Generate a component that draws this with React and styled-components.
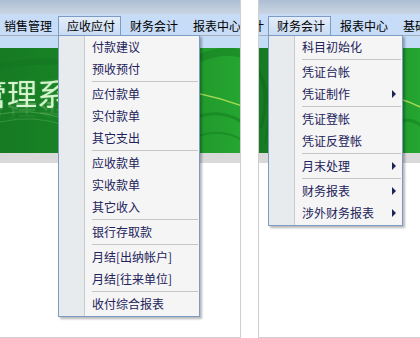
import React from "react";
import styled, { createGlobalStyle } from "styled-components";

const GlobalStyle = createGlobalStyle`
  html, body { margin: 0; padding: 0; background: #ffffff; }
  body { font-family: "Noto Sans CJK SC", "Noto Sans", sans-serif; }
  #root { width: 420px; height: 338px; }
`;

const Page = styled.div`
  display: flex;
  gap: 17px;
  width: 420px;
  height: 338px;
  background: #ffffff;
  overflow: hidden;
`;

const Panel = styled.section`
  box-sizing: border-box;
  flex: 0 0 ${(p) => p.$w}px;
  height: 338px;
  display: flex;
  flex-direction: column;
  overflow: hidden;
  border-bottom: 1px solid #cfcfcf;
  border-left: ${(p) => (p.$side === "right" ? "1px solid #cfcfcf" : "none")};
  border-right: ${(p) => (p.$side === "left" ? "1px solid #cfcfcf" : "none")};
`;

const TitleStrip = styled.div`
  flex: 0 0 14px;
  background: linear-gradient(#adbed3, #c8d4e2);
`;

const MenuBar = styled.nav`
  box-sizing: border-box;
  flex: 0 0 22px;
  display: flex;
  padding-top: 2px;
  background: #c6dcf7;
  border-bottom: 1px solid #a3adba;
  & > :first-child {
    margin-left: ${(p) => p.$lead}px;
  }
`;

const MenuItem = styled.div`
  position: relative;
  box-sizing: border-box;
  flex: 0 0 auto;
  height: 19px;
  padding: 0 ${(p) => (p.$tight ? 3 : 5)}px 0 8px;
  border: 1px solid transparent;
  border-bottom: none;
  font-size: 12px;
  line-height: 18px;
  color: #000000;
  white-space: nowrap;
  ${(p) =>
    p.$active &&
    `
    border-color: #7c9cc6;
    background: linear-gradient(#e4edf9, #cadcf3);
    z-index: 3;
  `}
`;

const SubStrip = styled.div`
  flex: 0 0 12px;
  background: #c5dcf7;
`;

const Banner = styled.div`
  flex: 0 0 105px;
  display: grid;
  overflow: hidden;
  background: linear-gradient(90deg, #167a23 0%, #1a8526 35%, #1f952a 75%, #25a531 100%);
  & > * {
    grid-area: 1 / 1;
  }
`;

const BannerArt = styled.svg`
  display: block;
  width: 100%;
  height: 105px;
`;

const BannerTitle = styled.div`
  align-self: start;
  justify-self: start;
  margin: 28px 0 0 -23px;
  font-size: 30px;
  line-height: 32px;
  letter-spacing: 0;
  color: #d6f4cd;
  white-space: nowrap;
  text-shadow: 0 0 2px rgba(210, 255, 200, 0.35);
  -webkit-box-reflect: below -6px linear-gradient(transparent 45%, rgba(255, 255, 255, 0.28));
`;

const GrayStrip = styled.div`
  flex: 0 0 10px;
  background: #d9d9d9;
`;

const Dropdown = styled.div`
  position: absolute;
  top: 100%;
  left: -1px;
  box-sizing: border-box;
  width: ${(p) => p.$w}px;
  padding-bottom: 1px;
  border: 1px solid #7c9cc6;
  background: linear-gradient(
    to right,
    #e8ebee 0,
    #e8ebee 25px,
    #c8cacc 25px,
    #c8cacc 26px,
    #f5f5f5 26px
  );
  box-shadow: 2px 2px 2px rgba(0, 0, 0, 0.28);
  z-index: 10;
`;

const DropItem = styled.div`
  display: flex;
  align-items: center;
  justify-content: space-between;
  height: 22px;
  padding: 0 6px 0 33px;
  font-size: 12px;
  color: #22225a;
  white-space: nowrap;
`;

const Separator = styled.div`
  height: 1px;
  margin: 1px 1px 1px 33px;
  background: #c6c6c6;
`;

const Arrow = styled.span`
  width: 0;
  height: 0;
  border-left: 4px solid #1c2458;
  border-top: 4px solid transparent;
  border-bottom: 4px solid transparent;
`;

const leftMenu = [
  "付款建议",
  "预收预付",
  "-",
  "应付款单",
  "实付款单",
  "其它支出",
  "-",
  "应收款单",
  "实收款单",
  "其它收入",
  "-",
  "银行存取款",
  "-",
  "月结[出纳帐户]",
  "月结[往来单位]",
  "-",
  "收付综合报表",
];

const rightMenu = [
  ["科目初始化"],
  "-",
  ["凭证台帐"],
  ["凭证制作", true],
  "-",
  ["凭证登帐"],
  ["凭证反登帐"],
  "-",
  ["月末处理", true],
  "-",
  ["财务报表", true],
  ["涉外财务报表", true],
];

function MenuList({ items, width }) {
  return (
    <Dropdown $w={width}>
      {items.map((it, i) => {
        if (it === "-") return <Separator key={i} />;
        const [label, sub] = Array.isArray(it) ? it : [it, false];
        return (
          <DropItem key={i}>
            <span>{label}</span>
            {sub && <Arrow />}
          </DropItem>
        );
      })}
    </Dropdown>
  );
}

function LeftArt() {
  return (
    <BannerArt viewBox="0 0 240 105" preserveAspectRatio="none">
      <path d="M-10 20 Q 60 5 140 25" stroke="#12701f" strokeWidth="6" fill="none" opacity="0.35" />
      <path d="M0 66 Q 30 60 62 70" stroke="#8fd88a" strokeWidth="1" fill="none" opacity="0.35" />
      <path d="M0 74 Q 35 66 66 78" stroke="#8fd88a" strokeWidth="1" fill="none" opacity="0.25" />
      <path d="M160 40 Q 205 44 242 58" stroke="#b9e25a" strokeWidth="1.6" fill="none" opacity="0.85" />
      <path d="M195 70 Q 220 60 242 74" stroke="#117a1d" strokeWidth="3" fill="none" opacity="0.5" />
      <path d="M198 88 Q 222 80 242 92" stroke="#117a1d" strokeWidth="2" fill="none" opacity="0.45" />
      <path d="M200 10 Q 225 0 242 6" stroke="#106e1b" strokeWidth="8" fill="none" opacity="0.35" />
    </BannerArt>
  );
}

function RightArt() {
  return (
    <BannerArt viewBox="0 0 161 105" preserveAspectRatio="none">
      <path d="M-2 20 Q 12 45 2 80" stroke="#0f6a1b" strokeWidth="3" fill="none" opacity="0.55" />
      <path d="M4 30 Q 14 55 6 95" stroke="#0f6a1b" strokeWidth="2" fill="none" opacity="0.4" />
      <path d="M110 44 Q 140 48 163 60" stroke="#b9e25a" strokeWidth="1.6" fill="none" opacity="0.85" />
      <path d="M135 75 Q 150 68 163 78" stroke="#117a1d" strokeWidth="3" fill="none" opacity="0.45" />
    </BannerArt>
  );
}

export default function App() {
  return (
    <>
      <GlobalStyle />
      <Page>
        <Panel $w={241} $side="left">
          <TitleStrip />
          <MenuBar $lead={-5}>
            <MenuItem>销售管理</MenuItem>
            <MenuItem $active>
              应收应付
              <MenuList items={leftMenu} width={142} />
            </MenuItem>
            <MenuItem>财务会计</MenuItem>
            <MenuItem>报表中心</MenuItem>
          </MenuBar>
          <SubStrip />
          <Banner>
            <LeftArt />
            <BannerTitle>管理系统</BannerTitle>
          </Banner>
          <GrayStrip />
        </Panel>
        <Panel $w={162} $side="right">
          <TitleStrip />
          <MenuBar $lead={-16}>
            <MenuItem $tight>计</MenuItem>
            <MenuItem $active>
              财务会计
              <MenuList items={rightMenu} width={135} />
            </MenuItem>
            <MenuItem>报表中心</MenuItem>
            <MenuItem>基础设置</MenuItem>
          </MenuBar>
          <SubStrip />
          <Banner>
            <RightArt />
          </Banner>
          <GrayStrip />
        </Panel>
      </Page>
    </>
  );
}
